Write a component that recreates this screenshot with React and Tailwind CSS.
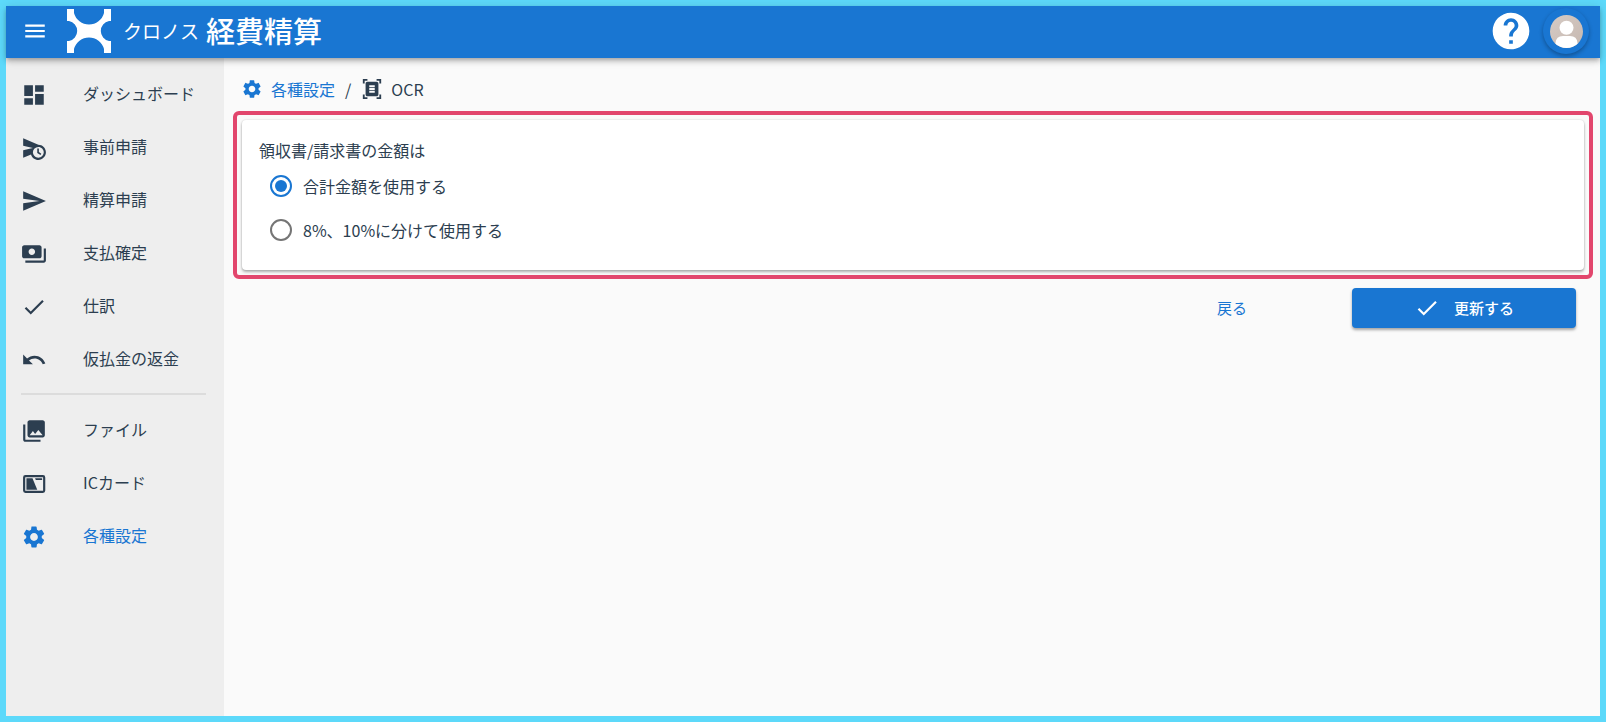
import { useState } from "react";
import {
  MdCheck,
  MdDashboard,
  MdDocumentScanner,
  MdHelp,
  MdMenu,
  MdPayments,
  MdPhotoLibrary,
  MdScheduleSend,
  MdSend,
  MdSettings,
  MdUndo,
} from "react-icons/md";

function IcCardIcon({ className }) {
  return (
    <svg viewBox="0 0 24 24" fill="none" className={className} aria-hidden="true">
      <rect x="2.9" y="4.7" width="18.5" height="14.6" rx="1.2" stroke="currentColor" strokeWidth="2" />
      <path d="M5 6.6H10.6L15 17.4H5z" fill="currentColor" />
      <path d="M13 6.6H19.5V8.2H13.7z" fill="currentColor" />
    </svg>
  );
}

function Logo() {
  return (
    <svg viewBox="0 0 44 44" className="size-11 shrink-0" fill="white" aria-hidden="true">
      <path d="M0 0H7V4A15.5 15.5 0 0 0 37 4V0H44V12H42A10.2 10.2 0 0 0 42 32H44V44H37V40A15.5 15.5 0 0 0 7 40V44H0V32H2A10.2 10.2 0 0 0 2 12H0z" />
    </svg>
  );
}

function AvatarIcon() {
  return (
    <svg viewBox="0 0 33 33" className="size-[33px]" aria-hidden="true">
      <defs>
        <clipPath id="avatar-clip">
          <circle cx="16.5" cy="16.5" r="16.5" />
        </clipPath>
        <linearGradient id="avatar-bg" x1="0" y1="0" x2="1" y2="1">
          <stop offset="0" stopColor="#d6cbc5" />
          <stop offset="1" stopColor="#c6b8b0" />
        </linearGradient>
      </defs>
      <g clipPath="url(#avatar-clip)">
        <rect width="33" height="33" fill="url(#avatar-bg)" />
        <circle cx="16.5" cy="12.8" r="7" fill="white" />
        <path d="M5.5 33V28Q6 21 13 21H20Q27 21 27.5 28V33z" fill="white" />
      </g>
    </svg>
  );
}

const primaryNav = [
  { label: "ダッシュボード", Icon: MdDashboard },
  { label: "事前申請", Icon: MdScheduleSend },
  { label: "精算申請", Icon: MdSend },
  { label: "支払確定", Icon: MdPayments },
  { label: "仕訳", Icon: MdCheck },
  { label: "仮払金の返金", Icon: MdUndo },
];

const secondaryNav = [
  { label: "ファイル", Icon: MdPhotoLibrary },
  { label: "ICカード", Icon: IcCardIcon },
  { label: "各種設定", Icon: MdSettings, active: true },
];

function NavList({ items }) {
  return (
    <ul>
      {items.map(({ label, Icon, active }) => (
        <li key={label}>
          <a
            href="#"
            aria-current={active ? "page" : undefined}
            className={`flex h-[53px] items-center gap-9 pl-[15px] ${active ? "text-[#1976d2]" : "text-[#2c3e50]"}`}
          >
            <Icon className="size-[26px] shrink-0" />
            <span className="pb-1">{label}</span>
          </a>
        </li>
      ))}
    </ul>
  );
}

const amountOptions = [
  { value: "total", label: "合計金額を使用する" },
  { value: "split", label: "8%、10%に分けて使用する" },
];

export default function App() {
  const [amount, setAmount] = useState("total");

  return (
    <div className="flex min-h-screen flex-col border-6 border-[#5dd9fa] bg-[#fafafa] font-['Noto_Sans_CJK_JP',sans-serif] text-base text-[#2c3e50]">
      <header className="z-10 flex h-13 items-center bg-[#1976d2] pr-[11px] pb-[2px] pl-4 text-white shadow-[0_2px_4px_-1px_rgba(0,0,0,0.2),0_4px_5px_rgba(0,0,0,0.14),0_1px_10px_rgba(0,0,0,0.12)]">
        <button type="button" aria-label="メニュー">
          <MdMenu className="size-[26px]" />
        </button>
        <a href="#" className="ml-[19px] flex items-center whitespace-nowrap">
          <Logo />
          <span className="ml-3 pb-[2px] text-[19px] leading-none">クロノス</span>
          <span className="ml-[7px] pb-[2px] text-[29px] leading-none font-medium">経費精算</span>
        </a>
        <button type="button" aria-label="ヘルプ" className="ml-auto">
          <MdHelp className="size-11" />
        </button>
        <button
          type="button"
          aria-label="アカウント"
          className="ml-[10px] flex size-[46px] items-center justify-center rounded-full bg-[#1976d2] shadow-[0_2px_4px_rgba(0,0,0,0.3)]"
        >
          <AvatarIcon />
        </button>
      </header>

      <div className="flex grow">
        <nav className="w-[218px] shrink-0 bg-[#eeeeee] pt-[10px]">
          <NavList items={primaryNav} />
          <hr className="mt-[7px] mr-[18px] mb-[9px] ml-[15px] border-t-2 border-[#dcdcdc]" />
          <NavList items={secondaryNav} />
        </nav>

        <main className="min-w-0 grow pt-[19px] pr-[7px] pl-[9px]">
          <nav aria-label="パンくず" className="flex items-center pl-2">
            <a href="#" className="flex items-center gap-2 text-[#1976d2]">
              <MdSettings className="size-[22px]" />
              各種設定
            </a>
            <span className="mx-[10px]">/</span>
            <span className="flex items-center gap-2">
              <MdDocumentScanner className="size-[22px]" />
              OCR
            </span>
          </nav>

          <div className="mt-[10px] rounded-md border-4 border-[#e2466d] p-[5px]">
            <form
              id="ocr-form"
              onSubmit={(e) => e.preventDefault()}
              className="rounded bg-white px-[17px] pt-[18px] pb-[18px] shadow-[0_2px_3px_rgba(0,0,0,0.3),0_0_2px_rgba(0,0,0,0.15)]"
            >
              <fieldset>
                <legend className="pb-[2px]">領収書/請求書の金額は</legend>
                {amountOptions.map(({ value, label }) => (
                  <label key={value} className="flex h-11 items-center gap-[11px] pl-[11px]">
                    <input
                      type="radio"
                      name="amount"
                      value={value}
                      checked={amount === value}
                      onChange={() => setAmount(value)}
                      className="size-[22px] appearance-none rounded-full border-2 border-[#757575] bg-clip-content p-[3px] checked:border-[#1976d2] checked:bg-[#1976d2]"
                    />
                    {label}
                  </label>
                ))}
              </fieldset>
            </form>
          </div>

          <div className="mt-[9px] flex justify-end pr-[17px] text-[15px]">
            <button type="button" className="mr-12 h-10 w-36 text-[#1976d2]">
              戻る
            </button>
            <button
              type="submit"
              form="ocr-form"
              className="flex h-10 w-56 items-center justify-center gap-[14px] rounded bg-[#1976d2] font-medium text-white shadow-[0_2px_3px_rgba(0,0,0,0.35)]"
            >
              <MdCheck className="size-[26px]" />
              更新する
            </button>
          </div>
        </main>
      </div>
    </div>
  );
}
